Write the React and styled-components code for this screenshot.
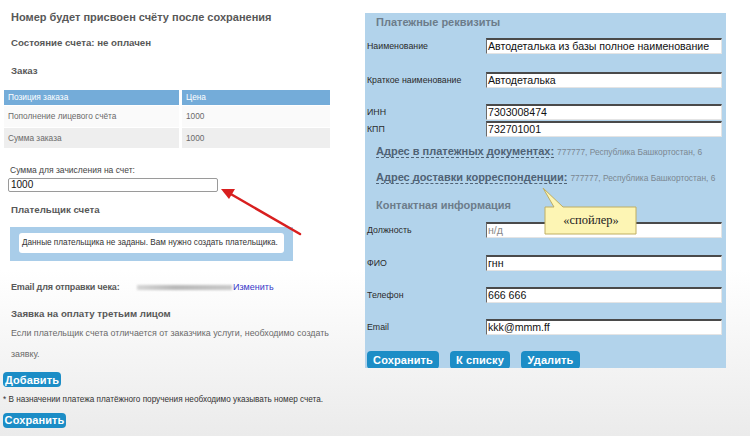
import styled, { createGlobalStyle } from 'styled-components'

const Global = createGlobalStyle`
html, body { margin:0; padding:0; }
body {
  width:750px;
  height:436px;
  overflow:hidden;
  font-family:"Liberation Sans", Arial, sans-serif;
  background:linear-gradient(to bottom, #ffffff 0%, #ffffff 62%, #ebebeb 100%);
}
`

const Page = styled.div`
position:relative;
width:750px;
height:436px;
display:flex;
`

const Left = styled.div`
width:365px;
padding-left:3px;
box-sizing:border-box;
`

const Heading = styled.div`
margin:${p => p.$top}px 0 0 ${p => p.$left ?? 8}px;
font-size:${p => p.$size ?? 9.7}px;
line-height:14px;
font-weight:bold;
color:#585858;
white-space:nowrap;
`

const Table = styled.div`
margin:12px 0 0 1px;
width:326px;
display:grid;
grid-template-columns:175px 148px;
column-gap:3px;
font-size:8.3px;
color:#6a6a6a;
`

const Cell = styled.div`
height:${p => p.$h}px;
line-height:${p => p.$h}px;
padding-left:4px;
background:${p => p.$head ? '#74acd9' : p.$alt ? '#eeeeee' : '#fafafa'};
color:${p => p.$head ? '#ffffff' : '#6a6a6a'};
margin-bottom:1px;
`

const Small = styled.div`
margin:${p => p.$top}px 0 0 ${p => p.$left ?? 7}px;
font-size:${p => p.$size ?? 8.5}px;
line-height:${p => p.$lh ?? 10}px;
color:${p => p.$color ?? '#444'};
white-space:nowrap;
`

const AmountInput = styled.div`
margin:3px 0 0 5px;
width:210px;
height:14px;
box-sizing:border-box;
border:1px solid #9a9a9a;
border-radius:2px;
background:#fff;
font-size:10px;
line-height:12px;
padding-left:2px;
color:#111;
`

const PayerBox = styled.div`
margin:10px 0 0 7px;
width:283px;
height:34px;
box-sizing:border-box;
padding:6px 9px;
background:#a9cde9;
`

const PayerNote = styled.div`
height:20px;
border-radius:3px;
background:#fff;
font-size:8.2px;
line-height:20px;
padding-left:3px;
color:#333;
white-space:nowrap;
`

const EmailRow = styled.div`
margin:19px 0 0 8px;
display:flex;
align-items:center;
height:14px;
`

const EmailLabel = styled.span`
font-size:9px;
font-weight:bold;
letter-spacing:-0.15px;
color:#585858;
width:126px;
white-space:nowrap;
`

const Blurred = styled.span`
width:95px;
height:5px;
background:linear-gradient(to right, #d6d6d6, #b8b8b8 40%, #c8c8c8);
filter:blur(1.2px);
`

const Link = styled.span`
font-size:9px;
color:#3737c8;
margin-left:1px;
`

const Para = styled.div`
margin:2px 0 0 8px;
font-size:8.9px;
line-height:21px;
color:#6a6a6a;
`

const Button = styled.div`
margin-top:${p => p.$top ?? 0}px;
display:inline-flex;
align-items:center;
justify-content:center;
height:${p => p.$h ?? 15}px;
width:${p => p.$w}px;
box-sizing:border-box;
border-radius:4px;
background:#1c8dc6;
color:#fff;
font-size:11px;
font-weight:bold;
letter-spacing:0.1px;
`

const Panel = styled.div`
position:relative;
margin-top:13px;
width:361px;
height:355px;
background:#b2d3eb;
padding:2px 4px 0 2px;
box-sizing:border-box;
overflow:hidden;
`

const PanelTitle = styled.div`
margin:${p => p.$top}px 0 0 9px;
font-size:11px;
line-height:14px;
font-weight:bold;
color:#6c7c8a;
`

const Row = styled.div`
margin-top:${p => p.$top}px;
display:flex;
align-items:center;
height:16px;
`

const Label = styled.div`
width:119px;
font-size:8.8px;
color:#2b2b2b;
white-space:nowrap;
`

const Field = styled.div`
flex:1;
height:16px;
box-sizing:border-box;
background:#fff;
border-top:2px solid #4a4a4a;
border-left:1px solid #6a6a6a;
border-right:1px solid #e4e4e4;
border-bottom:1px solid #e4e4e4;
font-size:10.6px;
line-height:13px;
padding-left:1px;
white-space:nowrap;
overflow:hidden;
color:${p => p.$muted ? '#8a8a8a' : '#111'};
`

const Address = styled.div`
margin:${p => p.$top}px 0 0 9px;
display:flex;
align-items:baseline;
height:14px;
line-height:14px;
white-space:nowrap;
`

const AddressHead = styled.span`
font-size:11px;
font-weight:bold;
color:#4f6275;
border-bottom:1px dashed #4f6275;
line-height:11px;
`

const AddressText = styled.span`
margin-left:3px;
font-size:8.4px;
color:#7b8791;
`

const Buttons = styled.div`
margin-top:16px;
display:flex;
gap:11px;
`

const Callout = styled.div`
position:absolute;
left:173px;
top:170px;
width:100px;
height:56px;
`

const CalloutText = styled.div`
position:absolute;
left:7px;
top:24px;
width:92px;
height:27px;
display:flex;
align-items:center;
justify-content:center;
font-family:"Liberation Serif", "Times New Roman", serif;
font-size:12.5px;
color:#222;
`

const Arrow = styled.svg`
position:absolute;
left:215px;
top:182px;
pointer-events:none;
`

function App() {
  return (
    <>
      <Global />
      <Page>
        <Left>
          <Heading $top={10} $size={11}>Номер будет присвоен счёту после сохранения</Heading>
          <Heading $top={12}>Состояние счета: не оплачен</Heading>
          <Heading $top={14}>Заказ</Heading>
          <Table>
            <Cell $head $h={15}>Позиция заказа</Cell>
            <Cell $head $h={15}>Цена</Cell>
            <Cell $h={21}>Пополнение лицевого счёта</Cell>
            <Cell $h={21}>1000</Cell>
            <Cell $alt $h={20}>Сумма заказа</Cell>
            <Cell $alt $h={20}>1000</Cell>
          </Table>
          <Small $top={16} $size={8.5}>Сумма для зачисления на счет:</Small>
          <AmountInput>1000</AmountInput>
          <Heading $top={11}>Плательщик счета</Heading>
          <PayerBox>
            <PayerNote>Данные плательщика не заданы. Вам нужно создать плательщика.</PayerNote>
          </PayerBox>
          <EmailRow>
            <EmailLabel>Email для отправки чека:</EmailLabel>
            <Blurred />
            <Link>Изменить</Link>
          </EmailRow>
          <Heading $top={13}>Заявка на оплату третьим лицом</Heading>
          <Para>
            Если плательщик счета отличается от заказчика услуги, необходимо создать
            <br />заявку.
          </Para>
          <Button $top={7} $w={58}>Добавить</Button>
          <Small $top={7} $left={0} $size={8.2} $color="#333">* В назначении платежа платёжного поручения необходимо указывать номер счета.</Small>
          <div>
            <Button $top={8} $w={63}>Сохранить</Button>
          </div>
        </Left>

        <Panel>
          <PanelTitle $top={0}>Платежные реквизиты</PanelTitle>
          <Row $top={9}><Label>Наименование</Label><Field>Автодеталька из базы полное наименование</Field></Row>
          <Row $top={18}><Label>Краткое наименование</Label><Field>Автодеталька</Field></Row>
          <Row $top={16}><Label>ИНН</Label><Field>7303008474</Field></Row>
          <Row $top={1}><Label>КПП</Label><Field>732701001</Field></Row>
          <Address $top={8}>
            <AddressHead>Адрес в платежных документах:</AddressHead>
            <AddressText>777777, Республика Башкортостан, 6</AddressText>
          </Address>
          <Address $top={12}>
            <AddressHead>Адрес доставки корреспонденции:</AddressHead>
            <AddressText>777777, Республика Башкортостан, 6</AddressText>
          </Address>
          <PanelTitle $top={13}>Контактная информация</PanelTitle>
          <Row $top={10}><Label>Должность</Label><Field $muted>н/д</Field></Row>
          <Row $top={17}><Label>ФИО</Label><Field>гнн</Field></Row>
          <Row $top={16}><Label>Телефон</Label><Field>666 666</Field></Row>
          <Row $top={16}><Label>Email</Label><Field>kkk@mmm.ff</Field></Row>
          <Buttons>
            <Button $w={72} $h={18}>Сохранить</Button>
            <Button $w={60} $h={18}>К списку</Button>
            <Button $w={59} $h={18}>Удалить</Button>
          </Buttons>
          <Callout>
            <svg width="100" height="56" viewBox="0 0 100 56">
              <path
                d="M5 5 L25 24 L98 24 L98 51 L7 51 L7 24 L16 24 Z"
                fill="#fdf5b4"
                stroke="#bfae62"
                strokeWidth="1"
                strokeLinejoin="round"
              />
            </svg>
            <CalloutText>«спойлер»</CalloutText>
          </Callout>
        </Panel>

        <Arrow width="90" height="56" viewBox="0 0 90 56">
          <line x1="85" y1="52" x2="14" y2="11" stroke="#d81f1f" strokeWidth="2.5" strokeLinecap="round" />
          <path d="M6 7 L20 7 L14 17 Z" fill="#d81f1f" />
        </Arrow>
      </Page>
    </>
  )
}

export default App
